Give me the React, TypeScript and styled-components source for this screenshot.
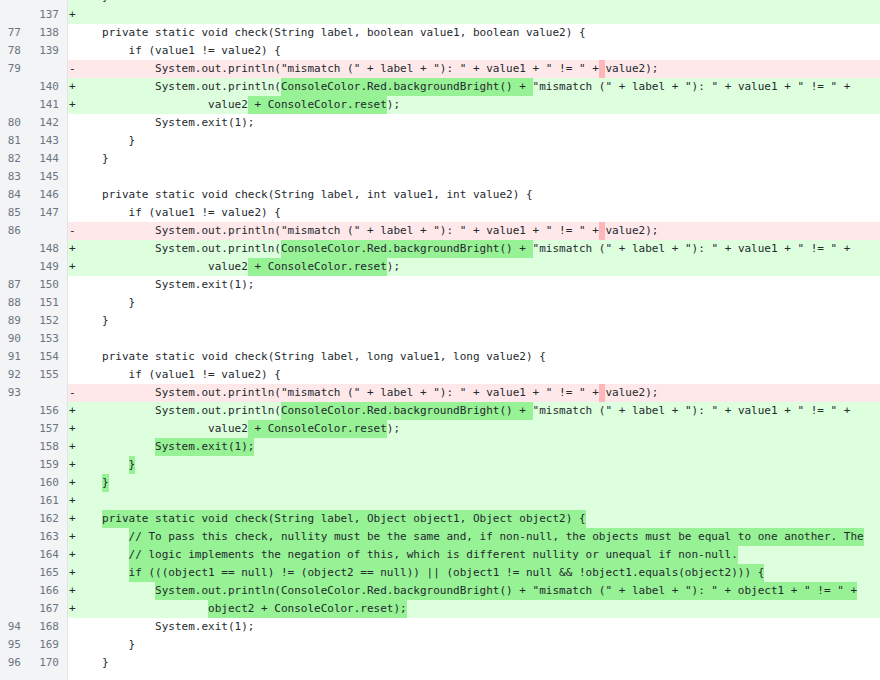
import React from 'react';
import styled, { createGlobalStyle, css } from 'styled-components';

type RowKind = 'ctx' | 'add' | 'del';

interface DiffLine {
  kind: RowKind;
  oldNo?: number;
  newNo?: number;
  text: string;
}

const GlobalStyle = createGlobalStyle`
  html, body {
    margin: 0;
    padding: 0;
    background: #ffffff;
    overflow: hidden;
  }
`;

const rowBackground = {
  ctx: '#ffffff',
  add: '#ddffdd',
  del: '#fee8e9',
};

const markBackground = {
  ctx: 'transparent',
  add: '#97f295',
  del: '#ffb6ba',
};

const monoText = css`
  font-family: 'DejaVu Sans Mono', 'Liberation Mono', monospace;
  font-size: 11px;
  line-height: 18px;
`;

const Viewport = styled.div`
  height: 680px;
  overflow: hidden;
`;

// the diff is scrolled, the first row shows only its lower edge
const DiffTable = styled.div`
  display: flex;
  flex-direction: column;
  min-height: 692px;
  margin-top: -12px;
`;

const Row = styled.div<{ $kind: RowKind }>`
  display: flex;
  height: 18px;
  background: ${(p) => rowBackground[p.$kind]};
`;

const Filler = styled.div`
  display: flex;
  flex: 1;
  background: #ffffff;
`;

const Gutter = styled.div`
  ${monoText}
  display: flex;
  flex: none;
  width: 67px;
  background: #f3f4f6;
  border-right: 1px solid #e1e4e8;
  color: #6b7480;
`;

const LineNo = styled.span<{ $width: number }>`
  width: ${(p) => p.$width}px;
  padding-right: 4px;
  box-sizing: border-box;
  text-align: right;
  white-space: pre;
`;

const Code = styled.div`
  ${monoText}
  flex: 1;
  padding-left: 1px;
  white-space: pre;
  overflow: hidden;
  color: #24292e;
`;

const Marker = styled.span`
  display: inline-block;
  width: 6.6px;
`;

const Mark = styled.span<{ $kind: RowKind }>`
  display: inline-block;
  height: 18px;
  vertical-align: top;
  background: ${(p) => markBackground[p.$kind]};
`;

const DEL_LINE =
  '            System.out.println("mismatch (" + label + "): " + value1 + " != " +« »value2);';
const ADD_LINE_A =
  '            System.out.println(«ConsoleColor.Red.backgroundBright() + »"mismatch (" + label + "): " + value1 + " != " +';
const ADD_LINE_B = '                    value2« + ConsoleColor.reset»);';

const lines: DiffLine[] = [
  { kind: 'add', newNo: 136, text: '    }' },
  { kind: 'add', newNo: 137, text: '' },
  { kind: 'ctx', oldNo: 77, newNo: 138, text: '    private static void check(String label, boolean value1, boolean value2) {' },
  { kind: 'ctx', oldNo: 78, newNo: 139, text: '        if (value1 != value2) {' },
  { kind: 'del', oldNo: 79, text: DEL_LINE },
  { kind: 'add', newNo: 140, text: ADD_LINE_A },
  { kind: 'add', newNo: 141, text: ADD_LINE_B },
  { kind: 'ctx', oldNo: 80, newNo: 142, text: '            System.exit(1);' },
  { kind: 'ctx', oldNo: 81, newNo: 143, text: '        }' },
  { kind: 'ctx', oldNo: 82, newNo: 144, text: '    }' },
  { kind: 'ctx', oldNo: 83, newNo: 145, text: '' },
  { kind: 'ctx', oldNo: 84, newNo: 146, text: '    private static void check(String label, int value1, int value2) {' },
  { kind: 'ctx', oldNo: 85, newNo: 147, text: '        if (value1 != value2) {' },
  { kind: 'del', oldNo: 86, text: DEL_LINE },
  { kind: 'add', newNo: 148, text: ADD_LINE_A },
  { kind: 'add', newNo: 149, text: ADD_LINE_B },
  { kind: 'ctx', oldNo: 87, newNo: 150, text: '            System.exit(1);' },
  { kind: 'ctx', oldNo: 88, newNo: 151, text: '        }' },
  { kind: 'ctx', oldNo: 89, newNo: 152, text: '    }' },
  { kind: 'ctx', oldNo: 90, newNo: 153, text: '' },
  { kind: 'ctx', oldNo: 91, newNo: 154, text: '    private static void check(String label, long value1, long value2) {' },
  { kind: 'ctx', oldNo: 92, newNo: 155, text: '        if (value1 != value2) {' },
  { kind: 'del', oldNo: 93, text: DEL_LINE },
  { kind: 'add', newNo: 156, text: ADD_LINE_A },
  { kind: 'add', newNo: 157, text: ADD_LINE_B },
  { kind: 'add', newNo: 158, text: '            «System.exit(1);»' },
  { kind: 'add', newNo: 159, text: '        «}»' },
  { kind: 'add', newNo: 160, text: '    «}»' },
  { kind: 'add', newNo: 161, text: '' },
  { kind: 'add', newNo: 162, text: '    «private static void check(String label, Object object1, Object object2) {»' },
  {
    kind: 'add',
    newNo: 163,
    text: '        «// To pass this check, nullity must be the same and, if non-null, the objects must be equal to one another. The»',
  },
  {
    kind: 'add',
    newNo: 164,
    text: '        «// logic implements the negation of this, which is different nullity or unequal if non-null.»',
  },
  {
    kind: 'add',
    newNo: 165,
    text: '        «if (((object1 == null) != (object2 == null)) || (object1 != null && !object1.equals(object2))) {»',
  },
  {
    kind: 'add',
    newNo: 166,
    text: '            «System.out.println(ConsoleColor.Red.backgroundBright() + "mismatch (" + label + "): " + object1 + " != " +»',
  },
  { kind: 'add', newNo: 167, text: '                    «object2 + ConsoleColor.reset);»' },
  { kind: 'ctx', oldNo: 94, newNo: 168, text: '            System.exit(1);' },
  { kind: 'ctx', oldNo: 95, newNo: 169, text: '        }' },
  { kind: 'ctx', oldNo: 96, newNo: 170, text: '    }' },
];

const markerFor: Record<RowKind, string> = { ctx: ' ', add: '+', del: '-' };

// « » wrap the changed words; odd pieces are highlighted
const renderText = (text: string, kind: RowKind) =>
  text.split(/[«»]/).map((piece, i) =>
    i % 2 === 1 ? (
      <Mark key={i} $kind={kind}>
        {piece}
      </Mark>
    ) : (
      <React.Fragment key={i}>{piece}</React.Fragment>
    ),
  );

const DiffRow = ({ line }: { line: DiffLine }) => (
  <Row $kind={line.kind}>
    <Gutter>
      <LineNo $width={25}>{line.oldNo ?? ''}</LineNo>
      <LineNo $width={38}>{line.newNo ?? ''}</LineNo>
    </Gutter>
    <Code>
      <Marker>{markerFor[line.kind]}</Marker>
      {renderText(line.text, line.kind)}
    </Code>
  </Row>
);

export default function App() {
  return (
    <Viewport>
      <GlobalStyle />
      <DiffTable>
        {lines.map((line, i) => (
          <DiffRow key={i} line={line} />
        ))}
        <Filler>
          <Gutter />
        </Filler>
      </DiffTable>
    </Viewport>
  );
}
